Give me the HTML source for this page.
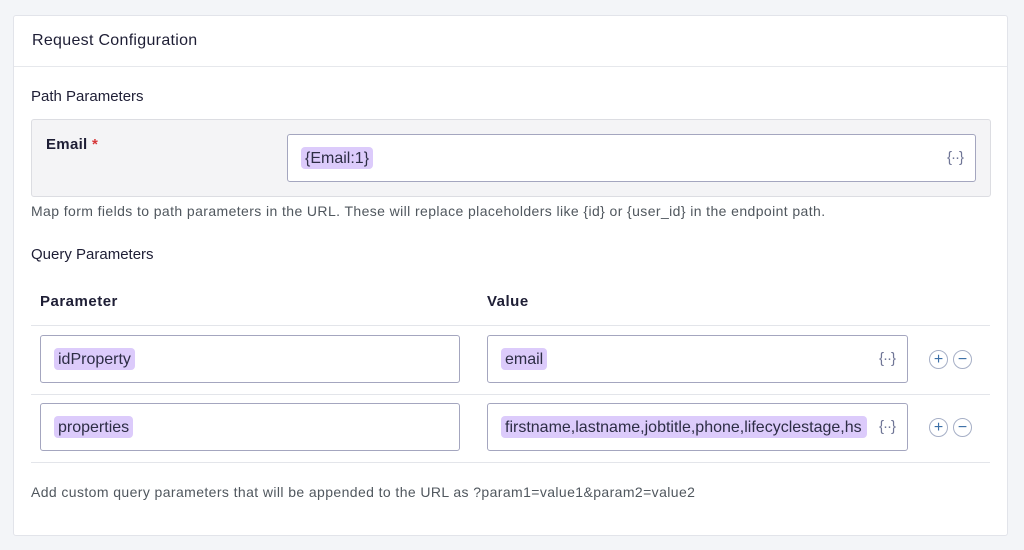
<!DOCTYPE html><html><head><style>
*{box-sizing:border-box;margin:0;padding:0}
body{width:1024px;height:550px;background:#f3f5f8;font-family:"Liberation Sans",sans-serif;color:#1e1e35;position:relative;overflow:hidden}
.a{position:absolute}
.card{left:13px;top:15px;width:995px;height:521px;background:#fff;border:1px solid #e2e4ea;border-radius:3px}
.inp{position:absolute;border:1px solid #a4a6bf;border-radius:3px;background:#fff;height:48px}
.chip{position:absolute;top:12px;height:22px;line-height:23px;background:#dccbfb;border-radius:4px;padding:0 4px;font-size:16px;color:#2d2d45}
.ic{position:absolute;right:12px;top:14px;font-size:15px;color:#6f7596;letter-spacing:-1px}
.btn{position:absolute;width:19px;height:19px;border:1px solid #a6afc6;border-radius:50%;color:#3b6fa7;font-size:16px;line-height:17px;text-align:center;background:#fff}
.hl{position:absolute;left:31px;width:959px;height:1px;background:#e3e5ea}
.t{position:absolute;font-size:15px;color:#1e1e35}
.h{position:absolute;font-size:14px;color:#50575e;letter-spacing:0.4px}
</style></head><body>
<div class="a card"></div>
<div class="t" style="left:32px;top:32px;font-size:16px;letter-spacing:0.3px">Request Configuration</div>
<div class="a" style="left:14px;top:66px;width:993px;height:1px;background:#e6e8ec"></div>
<div class="t" style="left:31px;top:88px">Path Parameters</div>
<div class="a" style="left:31px;top:119px;width:960px;height:78px;background:#f4f4f6;border:1px solid #dcdde2;border-radius:3px"></div>
<div class="t" style="left:46px;top:136px;font-weight:bold;letter-spacing:0.3px">Email <span style="color:#d63638">*</span></div>
<div class="inp" style="left:287px;top:134px;width:689px"><div class="chip" style="left:13px">{Email:1}</div><div class="ic">{··}</div></div>
<div class="h" style="left:31px;top:203px">Map form fields to path parameters in the URL. These will replace placeholders like {id} or {user_id} in the endpoint path.</div>
<div class="t" style="left:31px;top:246px">Query Parameters</div>
<div class="t" style="left:40px;top:293px;font-weight:bold;letter-spacing:0.5px">Parameter</div>
<div class="t" style="left:487px;top:293px;font-weight:bold;letter-spacing:0.5px">Value</div>
<div class="hl" style="top:325px"></div>
<div class="inp" style="left:40px;top:335px;width:420px"><div class="chip" style="left:13px">idProperty</div></div>
<div class="inp" style="left:487px;top:335px;width:421px"><div class="chip" style="left:13px">email</div><div class="ic">{··}</div></div>
<div class="btn" style="left:929px;top:350px">+</div><div class="btn" style="left:953px;top:350px">−</div>
<div class="hl" style="top:394px"></div>
<div class="inp" style="left:40px;top:403px;width:420px"><div class="chip" style="left:13px">properties</div></div>
<div class="inp" style="left:487px;top:403px;width:421px;overflow:hidden"><div class="chip" style="left:13px;width:366px;overflow:hidden;white-space:nowrap">firstname,lastname,jobtitle,phone,lifecyclestage,hs</div><div class="ic">{··}</div></div>
<div class="btn" style="left:929px;top:418px">+</div><div class="btn" style="left:953px;top:418px">−</div>
<div class="hl" style="top:462px"></div>
<div class="h" style="left:31px;top:484px">Add custom query parameters that will be appended to the URL as ?param1=value1&amp;param2=value2</div>
</body></html>
